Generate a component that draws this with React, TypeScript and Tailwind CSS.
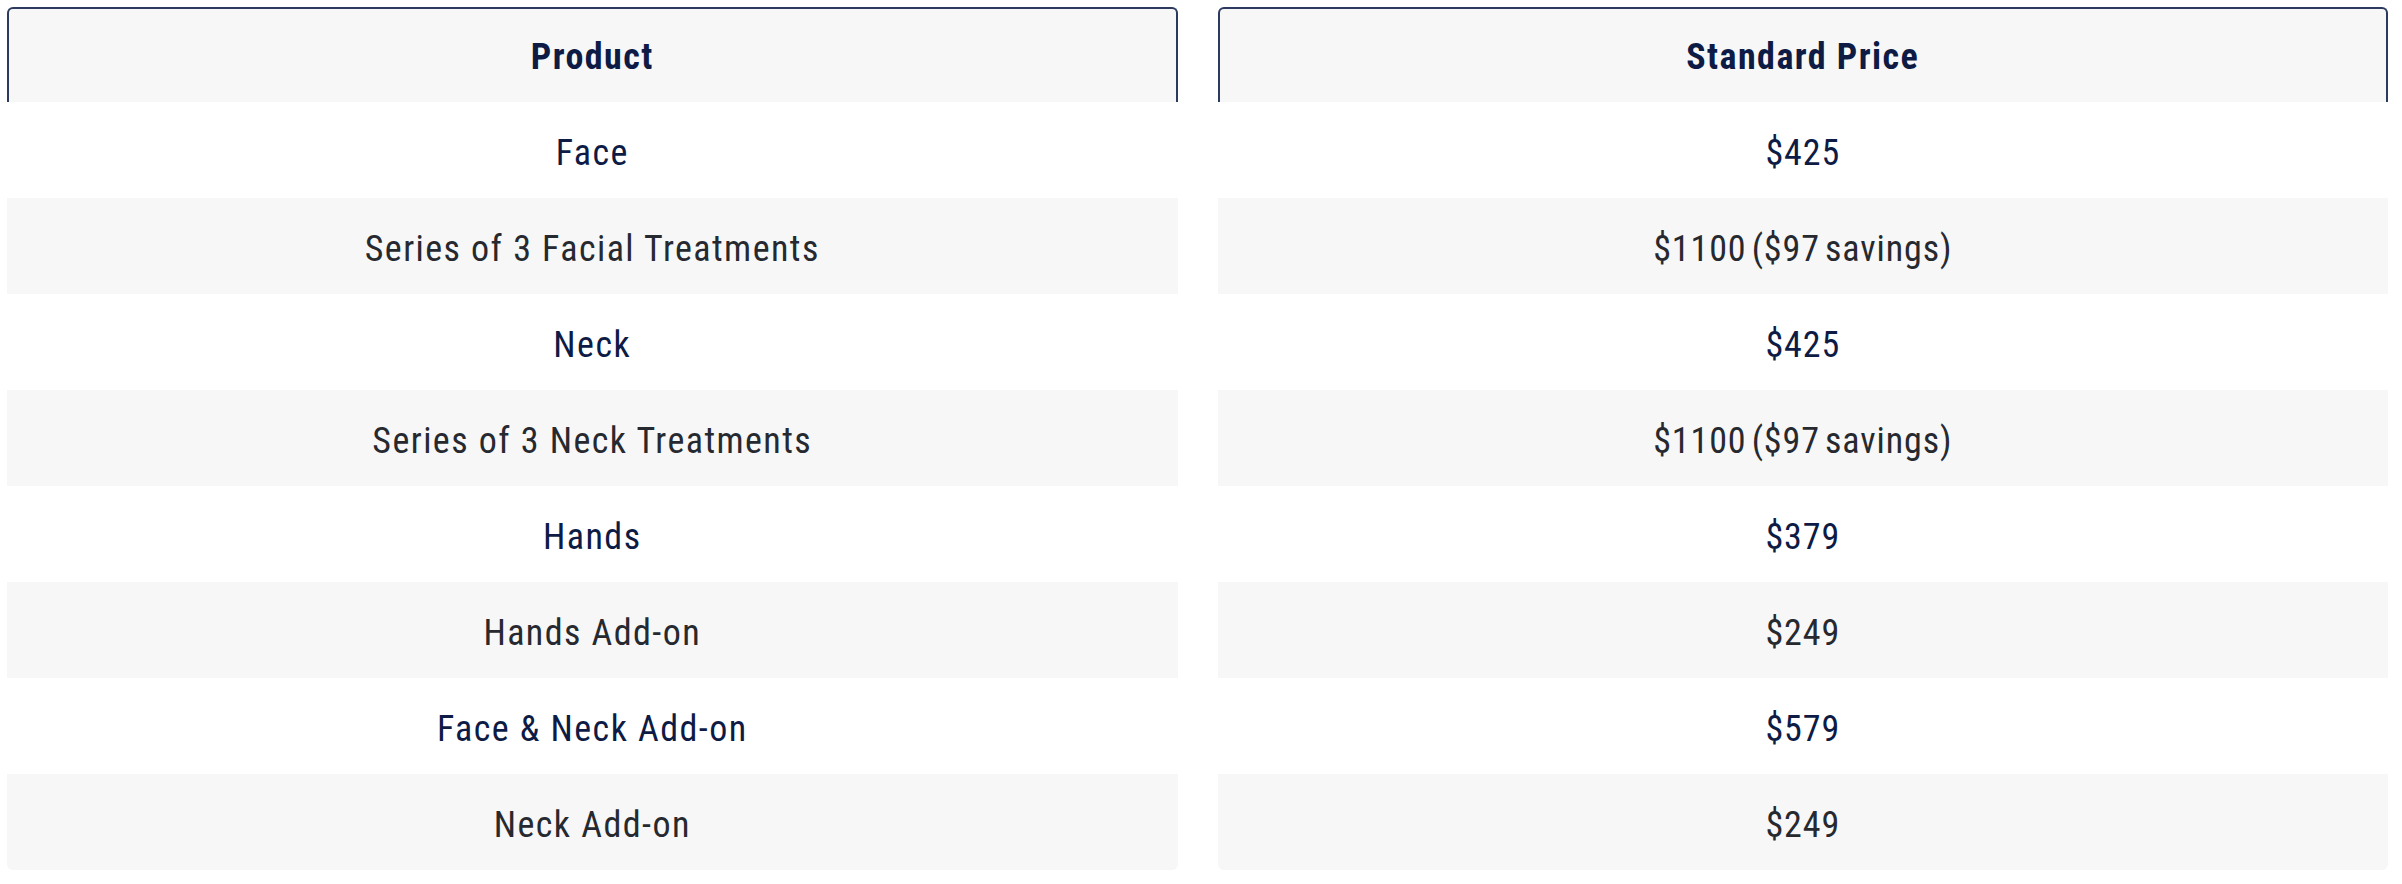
const rows: [string, string][] = [
  ['Face', '$425'],
  ['Series of 3 Facial Treatments', '$1100 ($97 savings)'],
  ['Neck', '$425'],
  ['Series of 3 Neck Treatments', '$1100 ($97 savings)'],
  ['Hands', '$379'],
  ['Hands Add-on', '$249'],
  ['Face & Neck Add-on', '$579'],
  ['Neck Add-on', '$249'],
];

const headers = ['Product', 'Standard Price'];

export default function App() {
  return (
    <div
      className="bg-white min-h-[884px] pt-[7px] pl-[7px] pr-[14px]"
      style={{ fontFamily: "'Roboto Condensed', 'Liberation Sans', sans-serif" }}
    >
      <div className="grid grid-cols-2 gap-x-[40px]">
        {headers.map((h) => (
          <div
            key={h}
            className="h-[95px] flex items-center justify-center pt-[3px] bg-[#f7f7f7] border-2 border-b-0 border-[#2b3a5e] rounded-t-[6px] text-[36px] font-bold text-[#0d1b45] tracking-[0.04em]"
          >
            {h}
          </div>
        ))}
        {rows.map(([product, price], i) => {
          const odd = i % 2 === 1;
          const last = i === rows.length - 1;
          const cell = `h-[96px] flex items-center justify-center pt-[6px] text-[36px] ${
            odd ? 'bg-[#f7f7f7] text-[#26292f]' : 'bg-white text-[#0d1b45]'
          } ${last ? 'rounded-b-[6px]' : ''}`;
          return [
            <div key={`p${i}`} className={`${cell} tracking-[0.04em]`}>{product}</div>,
            <div key={`s${i}`} className={`${cell} tracking-[0.025em] [word-spacing:-4px]`}>{price}</div>,
          ];
        })}
      </div>
    </div>
  );
}
